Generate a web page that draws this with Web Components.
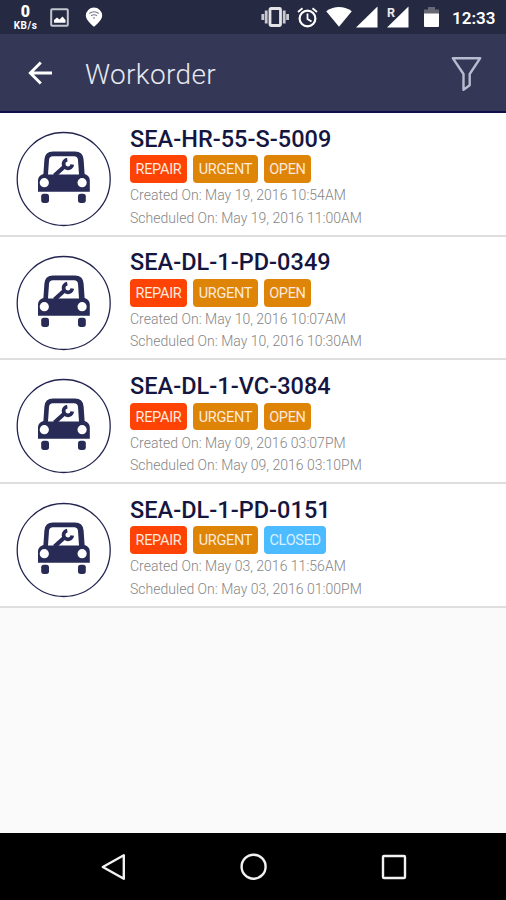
<!DOCTYPE html>
<html lang="en">
<head>
<meta charset="utf-8">
<title>Workorder</title>
<style>
    html, body { margin: 0; height: 100%; }
    body { font-family: Roboto, "Liberation Sans", sans-serif; overflow: hidden; }
</style>
</head>
<body>
<work-app></work-app>

<script>
const workorders = [
    { code: 'SEA-HR-55-S-5009', status: 'open', created: 'May 19, 2016 10:54AM', scheduled: 'May 19, 2016 11:00AM' },
    { code: 'SEA-DL-1-PD-0349', status: 'open', created: 'May 10, 2016 10:07AM', scheduled: 'May 10, 2016 10:30AM' },
    { code: 'SEA-DL-1-VC-3084', status: 'open', created: 'May 09, 2016 03:07PM', scheduled: 'May 09, 2016 03:10PM' },
    { code: 'SEA-DL-1-PD-0151', status: 'closed', created: 'May 03, 2016 11:56AM', scheduled: 'May 03, 2016 01:00PM' },
];

function crearTemplate(html){
    const t = document.createElement('template');
    t.innerHTML = html;
    return t;
}

// base: clones the template of each class into its shadow root
class BaseElement extends HTMLElement {
    constructor(){
        super();
        this.attachShadow({mode: 'open'});
        this.shadowRoot.appendChild(this.constructor.template.content.cloneNode(true));
    }
}

class StatusBar extends BaseElement {
    static template = crearTemplate(`
    <style>
        :host { display: flex; align-items: center; justify-content: space-between; height: 34px; box-sizing: border-box;
            padding: 0 11px 0 13px; background: #252941; color: #fff; }
        .left, .right { display: flex; align-items: center; }
        .speed { display: flex; flex-direction: column; align-items: center; width: 25px; font-weight: 700; }
        .speed b { font-size: 16px; line-height: 16px; }
        .speed span { font-size: 10px; line-height: 9px; letter-spacing: .5px; margin-top: -1px; white-space: nowrap; padding-top: 2px; }
        svg { display: block; flex: none; }
        .image { margin-left: 12px; }
        .pin { margin-left: 16px; }
        .alarm { margin-left: 8px; }
        .wifi { margin-left: 8px; }
        .cell { margin-left: 4px; }
        .cell2 { margin-left: 9px; }
        .battery { margin-left: 15px; }
        time { font-size: 17px; font-weight: 600; line-height: 20px; width: 43px; margin: 2px 0 0 13px; white-space: nowrap; }
    </style>
    <div class="left">
        <div class="speed"><b>0</b><span>KB/s</span></div>
        <svg class="image" width="19" height="19" viewBox="0 0 19 19">
            <rect x="1.2" y="1.2" width="16.6" height="16.6" rx="1" fill="none" stroke="#c4c6cf" stroke-width="2"/>
            <path d="M4 14.8V12l3-2.5 2.5 2 3-3 3 3.5v2.8Z" fill="#fff"/>
        </svg>
        <svg class="pin" width="18" height="20" viewBox="0 0 18 20">
            <path d="M9 .5a8.2 8.2 0 0 0-8.2 8.2C.8 13.5 9 19.7 9 19.7s8.2-6.2 8.2-11A8.2 8.2 0 0 0 9 .5Z" fill="#fff"/>
            <path d="M4.2 6.5q4.8-3.4 9.6 0M6 8.8q3-2 6 0M8 11h2" fill="none" stroke="#777b8b" stroke-width="1.1"/>
        </svg>
    </div>
    <div class="right">
        <svg width="28" height="20" viewBox="0 0 28 20">
            <rect x="9" y="1.5" width="10.5" height="17" rx="1" fill="none" stroke="#e4e4e6" stroke-width="2.8"/>
            <path d="M5.2 3.5v13M23.2 3.5v13M1.8 7v6M26.6 7v6" stroke="#c9cad1" stroke-width="2.8"/>
        </svg>
        <svg class="alarm" width="21" height="21" viewBox="0 0 21 21">
            <circle cx="10.5" cy="11.5" r="7.9" fill="none" stroke="#fff" stroke-width="2.2"/>
            <path d="M10.5 6.5v5.5l4 2.5M1 5l4.5-3.8M20 5l-4.5-3.8" fill="none" stroke="#fff" stroke-width="1.8"/>
        </svg>
        <svg class="wifi" width="26" height="20" viewBox="0 0 26 20">
            <path d="M.2 4.2Q13-4.2 25.8 4.2L13 19.8Z" fill="#fff"/>
        </svg>
        <svg class="cell" width="22" height="22" viewBox="0 0 22 22"><path d="M21.5.5v21H0Z" fill="#fff"/></svg>
        <svg class="cell2" width="22" height="22" viewBox="0 0 22 22">
            <path d="M21.5.5v21H0Z" fill="#fff"/>
            <text x="0" y="10.5" font-size="12.5" font-weight="700" fill="#e8e8ec" stroke="#252941" stroke-width="2" paint-order="stroke">R</text>
        </svg>
        <svg class="battery" width="15" height="20" viewBox="0 0 15 20">
            <path d="M4 0h7v2.5h4V7H0V2.5h4Z" fill="#666974"/><path d="M0 6.500h15V19q0 1-1 1H1q-1 0-1-1Z" fill="#fff"/>
        </svg>
        <time>12:33</time>
    </div>`);
}

class AppBar extends BaseElement {
    static template = crearTemplate(`
    <style>
        :host { display: flex; align-items: center; height: 79px; box-sizing: border-box; padding: 0 24px 0 28px;
            background: #343755; border-bottom: 2px solid #0f0e48; }
        h1 { flex: 1; margin: 4px 0 0 33px; font-size: 28px; font-weight: 300; line-height: 34px; color: #e8e9f0; letter-spacing: .35px; }
        svg { display: block; }
        .arrow { margin-top: 1px; }
        .filter { margin-top: 2px; }
    </style>
    <svg class="arrow" width="24" height="24" viewBox="0 0 24 24">
        <path d="M24 12H3M12.8 1.500 2.300 12l10.500 10.500" fill="none" stroke="#fff" stroke-width="2.9"/>
    </svg>
    <h1><slot></slot></h1>
    <svg class="filter" width="31" height="36" viewBox="0 0 31 36">
        <path d="M1.8 2.2h27.4L18.7 18v11.3l-6.2 4.5V18Z" fill="none" stroke="#b9bbd0" stroke-width="2.4" stroke-linejoin="round"/>
    </svg>`);
}

class TagBadge extends BaseElement {
    static template = crearTemplate(`
    <style>
        :host { display: flex; align-items: center; justify-content: center; width: 57px; height: 27.7px; box-sizing: border-box;
            padding-top: 1px; border-radius: 4px; background: #fe4304; color: #ffe9df; font-size: 14.5px; letter-spacing: -.3px; }
        :host([kind="urgent"]) { width: 65.3px; background: #de8406; }
        :host([kind="open"]) { width: 47px; background: #de8406; }
        :host([kind="closed"]) { width: 62.5px; background: #4dbbff; color: #d9f1ff; }
    </style>
    <slot></slot>`);
}

class CarIcon extends BaseElement {
    static template = crearTemplate(`
    <style>
        :host { display: block; width: 97px; height: 96px; }
        svg { display: block; }
    </style>
    <svg width="97" height="96" viewBox="-.5 0 97 96">
        <circle cx="48.2" cy="48" r="46.5" fill="#fff" stroke="#232550" stroke-width="1.3"/>
        <path fill="#272b55" fill-rule="evenodd" d="M36.5 20.5h23q8 0 8.6 8l1 14.5q5.2 1.5 5.2 6.5v11.3h-51.8V49.5q0-5 5.4-6.5l1-14.5q.6-8 8.6-8Z
            M37.5 25.3q-3.7 0-4 3.7l-1 14.5h31l-1-14.5q-.3-3.7-4-3.7Z"/>
        <path d="M49.5 35 39 44.5" stroke="#272b55" stroke-width="4.2"/>
        <path d="M51.8 28.6a4.4 4.4 0 1 0 5 5" fill="none" stroke="#272b55" stroke-width="3.7"/>
        <circle cx="28.8" cy="51.7" r="4.6" fill="#fff"/>
        <circle cx="66.6" cy="51.7" r="4.6" fill="#fff"/>
        <rect x="25.7" y="62.7" width="7.8" height="9.2" rx="2.6" fill="#272b55"/>
        <rect x="62.5" y="62.7" width="7.8" height="9.2" rx="2.6" fill="#272b55"/>
    </svg>`);
}

class WorkCard extends BaseElement {
    static template = crearTemplate(`
    <style>
        :host { display: flex; height: 123.7px; box-sizing: border-box; padding-left: 15px; background: #fff; border-bottom: 2px solid #dedede; }
        car-icon { margin-top: 18px; flex: none; }
        .info { margin-left: 18px; padding-top: 11.6px; }
        h2 { margin: 0; font-size: 23.5px; font-weight: 500; line-height: 28px; color: #15163f; letter-spacing: .03px; white-space: nowrap; }
        .tags { display: flex; gap: 5.8px; margin: 2.8px 0 1.2px; }
        p { margin: 0; font-size: 14px; font-weight: 300; line-height: 22.4px; color: #858585; letter-spacing: .01px; white-space: nowrap; }
    </style>
    <car-icon></car-icon>
    <div class="info">
        <h2></h2>
        <div class="tags">
            <tag-badge>REPAIR</tag-badge>
            <tag-badge kind="urgent">URGENT</tag-badge>
            <tag-badge class="status"></tag-badge>
        </div>
        <p class="created"></p>
        <p class="scheduled"></p>
    </div>`);

    set order(obj){
        const $ = sel => this.shadowRoot.querySelector(sel);
        $('h2').textContent = obj.code;
        $('.status').setAttribute('kind', obj.status);
        $('.status').textContent = obj.status.toUpperCase();
        $('.created').textContent = `Created On: ${obj.created}`;
        $('.scheduled').textContent = `Scheduled On: ${obj.scheduled}`;
    }
}

class NavBar extends BaseElement {
    static template = crearTemplate(`
    <style>
        :host { display: flex; align-items: center; justify-content: space-between; height: 67px; box-sizing: border-box;
            padding: 0 99px 0 101px; background: #000; }
        svg { display: block; fill: none; stroke: #f2f2f2; stroke-width: 2.4; }
    </style>
    <svg width="26" height="28" viewBox="0 0 26 28"><path d="M22.8 2.3v23.4L1.8 14Z" stroke-linejoin="round"/></svg>
    <svg width="28" height="28" viewBox="0 0 28 28"><circle cx="13.6" cy="13.7" r="12"/></svg>
    <svg width="26" height="26" viewBox="0 0 26 26"><rect x="2" y="2" width="22" height="22" rx="1"/></svg>`);
}

class WorkApp extends BaseElement {
    static template = crearTemplate(`
    <style>
        :host { display: flex; flex-direction: column; height: 900px; width: 506px; background: #fafafa; }
        main { flex: 1; min-height: 0; }
    </style>
    <status-bar></status-bar>
    <app-bar>Workorder</app-bar>
    <main></main>
    <nav-bar></nav-bar>`);

    connectedCallback(){
        const $main = this.shadowRoot.querySelector('main');
        workorders.forEach(o => {
            const card = document.createElement('work-card');
            card.order = o;
            $main.appendChild(card);
        });
    }
}

customElements.define('status-bar', StatusBar);
customElements.define('app-bar', AppBar);
customElements.define('tag-badge', TagBadge);
customElements.define('car-icon', CarIcon);
customElements.define('work-card', WorkCard);
customElements.define('nav-bar', NavBar);
customElements.define('work-app', WorkApp);
</script>
</body>
</html>
